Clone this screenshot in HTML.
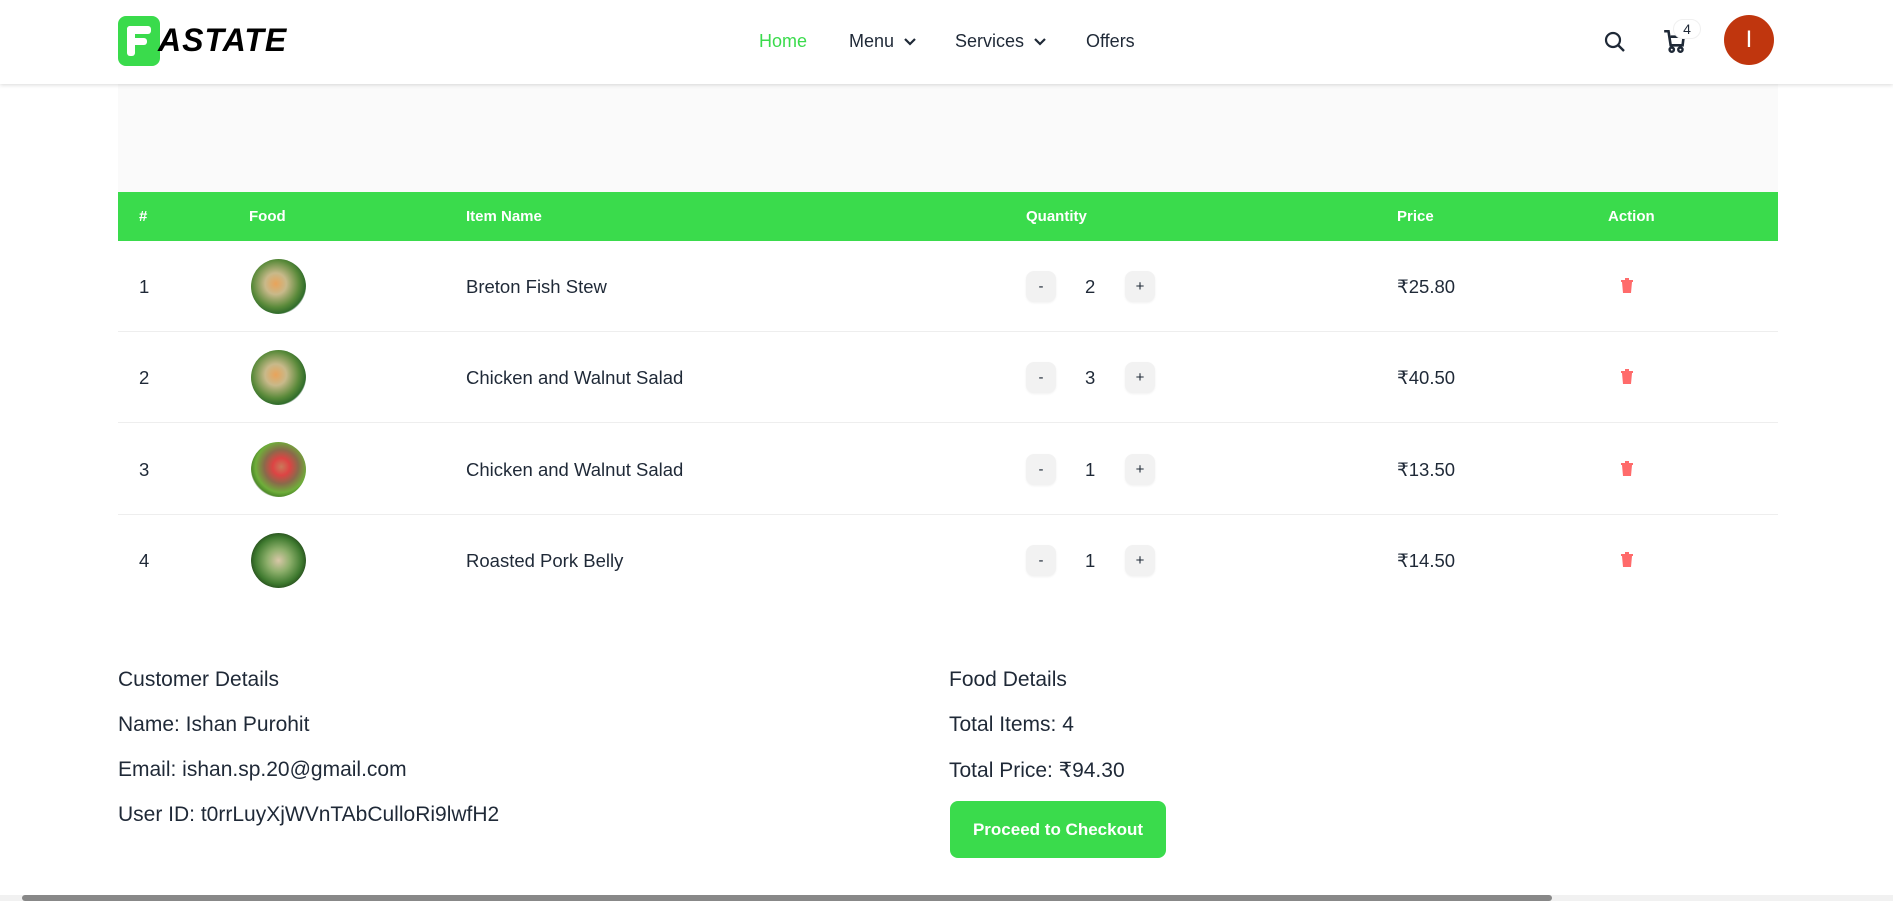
<!DOCTYPE html>
<html><head><meta charset="utf-8"><style>
*{box-sizing:border-box;margin:0;padding:0}
body{width:1893px;height:901px;overflow:hidden;background:#fff;font-family:"Liberation Sans",sans-serif;color:#1f2937;position:relative}
.hdr{position:absolute;left:0;top:0;width:1893px;height:84px;background:#fff;box-shadow:0 1px 4px rgba(0,0,0,.15);z-index:2}
.abs{position:absolute}
.nav{position:absolute;top:31px;font-size:18px;color:#1f2937}
.band{position:absolute;left:118px;top:84px;width:1660px;height:108px;background:#fafafa}
.th{position:absolute;left:118px;top:192px;width:1660px;height:49px;background:#3adb4c;color:#fff;font-weight:bold;font-size:15px}
.th span{position:absolute;top:16px}
.row{position:absolute;left:118px;width:1660px;height:91px;border-bottom:1px solid #eeeeee;font-size:18.5px}
.row .c{position:absolute;top:35px}
.img{position:absolute;left:133px;top:18px;width:55px;height:55px;border-radius:50%}
.btn{position:absolute;top:30px;width:30px;height:31px;border-radius:8px;background:#f2f2f2;font-size:15px;text-align:center;line-height:31px;box-shadow:0 1px 2px rgba(0,0,0,.06)}
.trash{position:absolute;left:1502px;top:37px}
.txt{position:absolute;font-size:21px;color:#1f2937}
</style></head><body>
<div class="hdr">
 <div class="abs" style="left:118px;top:16px;width:42px;height:50px;background:#3adb4c;border-radius:8px"></div>
 <div class="abs" style="left:127px;top:26px;width:8px;height:30px;background:#fff;border-radius:3px"></div>
 <div class="abs" style="left:127px;top:26px;width:24px;height:8px;background:#fff;border-radius:3px"></div>
 <div class="abs" style="left:127px;top:38px;width:20px;height:7px;background:#fff;border-radius:3px"></div>
 <div class="abs" style="left:158px;top:22px;font-size:32px;font-weight:bold;font-style:italic;color:#000;letter-spacing:1px">ASTATE</div>
 <div class="nav" style="left:759px;color:#3adb4c">Home</div>
 <div class="nav" style="left:849px">Menu <svg width="14" height="10" viewBox="0 0 14 10" style="margin-left:4px"><path d="M2 2l5 5 5-5" fill="none" stroke="#1f2937" stroke-width="2.2"/></svg></div>
 <div class="nav" style="left:955px">Services <svg width="14" height="10" viewBox="0 0 14 10" style="margin-left:4px"><path d="M2 2l5 5 5-5" fill="none" stroke="#1f2937" stroke-width="2.2"/></svg></div>
 <div class="nav" style="left:1086px">Offers</div>
 <svg class="abs" style="left:1603px;top:30px" width="24" height="24" viewBox="0 0 24 24"><circle cx="10" cy="10" r="7" fill="none" stroke="#1f2937" stroke-width="2.2"/><path d="M15 15l6 6" stroke="#1f2937" stroke-width="2.4"/></svg>
 <svg class="abs" style="left:1662px;top:28px" width="26" height="26" viewBox="0 0 24 24"><path d="M2 3h4l2 13h11l1-8H8" fill="none" stroke="#1f2937" stroke-width="2.4"/><circle cx="9" cy="20" r="2" fill="none" stroke="#1f2937" stroke-width="2.2"/><circle cx="17" cy="20" r="2" fill="none" stroke="#1f2937" stroke-width="2.2"/></svg>
 <div class="abs" style="left:1673px;top:19px;width:28px;height:20px;border-radius:10px;background:#fff;border:1px solid #f0f0f0;font-size:14px;text-align:center;line-height:18px;color:#1f2937">4</div>
 <div class="abs" style="left:1724px;top:15px;width:50px;height:50px;border-radius:50%;background:#c0360e;color:#fff;font-size:24px;text-align:center;line-height:50px">I</div>
</div>
<div class="band"></div>
<div class="th"><span style="left:21px">#</span><span style="left:131px">Food</span><span style="left:348px">Item Name</span><span style="left:908px">Quantity</span><span style="left:1279px">Price</span><span style="left:1490px">Action</span></div>

<div class="row" style="top:241px"><span class="c" style="left:21px">1</span><div class="img" style="background:radial-gradient(circle at 45% 45%,#e9a35a 0,#c8b98a 25%,#5a8a3a 55%,#2f6b2a 70%,#dfe5e5 73%,#fff 78%)"></div><span class="c" style="left:348px">Breton Fish Stew</span><div class="btn" style="left:908px">-</div><span class="c" style="left:967px">2</span><div class="btn" style="left:1007px">+</div><span class="c" style="left:1279px">₹25.80</span><svg class="trash" width="14" height="16" viewBox="0 0 14 16"><path d="M1 3h12M5 1h4" stroke="#ff6b6b" stroke-width="2"/><path d="M2 4h10l-1 11H3z" fill="#ff6b6b"/></svg></div>
<div class="row" style="top:332px"><span class="c" style="left:21px">2</span><div class="img" style="background:radial-gradient(circle at 45% 45%,#e9a35a 0,#c8b98a 25%,#5a8a3a 55%,#2f6b2a 70%,#dfe5e5 73%,#fff 78%)"></div><span class="c" style="left:348px">Chicken and Walnut Salad</span><div class="btn" style="left:908px">-</div><span class="c" style="left:967px">3</span><div class="btn" style="left:1007px">+</div><span class="c" style="left:1279px">₹40.50</span><svg class="trash" width="14" height="16" viewBox="0 0 14 16"><path d="M1 3h12M5 1h4" stroke="#ff6b6b" stroke-width="2"/><path d="M2 4h10l-1 11H3z" fill="#ff6b6b"/></svg></div>
<div class="row" style="top:424px"><span class="c" style="left:21px">3</span><div class="img" style="background:radial-gradient(circle at 55% 45%,#c97a5a 0,#d44 20%,#8a6a4a 40%,#6fae3a 60%,#4f8a2a 70%,#e5e5e5 73%,#fff 78%)"></div><span class="c" style="left:348px">Chicken and Walnut Salad</span><div class="btn" style="left:908px">-</div><span class="c" style="left:967px">1</span><div class="btn" style="left:1007px">+</div><span class="c" style="left:1279px">₹13.50</span><svg class="trash" width="14" height="16" viewBox="0 0 14 16"><path d="M1 3h12M5 1h4" stroke="#ff6b6b" stroke-width="2"/><path d="M2 4h10l-1 11H3z" fill="#ff6b6b"/></svg></div>
<div class="row" style="top:515px;border-bottom:none"><span class="c" style="left:21px">4</span><div class="img" style="background:radial-gradient(circle at 50% 50%,#d9c7a8 0,#8cae6a 30%,#3f7a2f 60%,#2d5a22 70%,#e5e5e5 73%,#fff 78%)"></div><span class="c" style="left:348px">Roasted Pork Belly</span><div class="btn" style="left:908px">-</div><span class="c" style="left:967px">1</span><div class="btn" style="left:1007px">+</div><span class="c" style="left:1279px">₹14.50</span><svg class="trash" width="14" height="16" viewBox="0 0 14 16"><path d="M1 3h12M5 1h4" stroke="#ff6b6b" stroke-width="2"/><path d="M2 4h10l-1 11H3z" fill="#ff6b6b"/></svg></div>

<div class="txt" style="left:118px;top:668px">Customer Details</div>
<div class="txt" style="left:118px;top:713px">Name: Ishan Purohit</div>
<div class="txt" style="left:118px;top:758px">Email: ishan.sp.20@gmail.com</div>
<div class="txt" style="left:118px;top:803px">User ID: t0rrLuyXjWVnTAbCulloRi9lwfH2</div>
<div class="txt" style="left:949px;top:668px">Food Details</div>
<div class="txt" style="left:949px;top:713px">Total Items: 4</div>
<div class="txt" style="left:949px;top:758px">Total Price: ₹94.30</div>
<div class="abs" style="left:950px;top:801px;width:216px;height:57px;background:#3adb4c;border-radius:8px;color:#fff;font-weight:bold;font-size:17px;text-align:center;line-height:57px">Proceed to Checkout</div>
<div class="abs" style="left:0;top:895px;width:1893px;height:6px;background:#f1f1f1"></div>
<div class="abs" style="left:22px;top:895px;width:1530px;height:6px;background:#888;border-radius:3px"></div>
</body></html>
